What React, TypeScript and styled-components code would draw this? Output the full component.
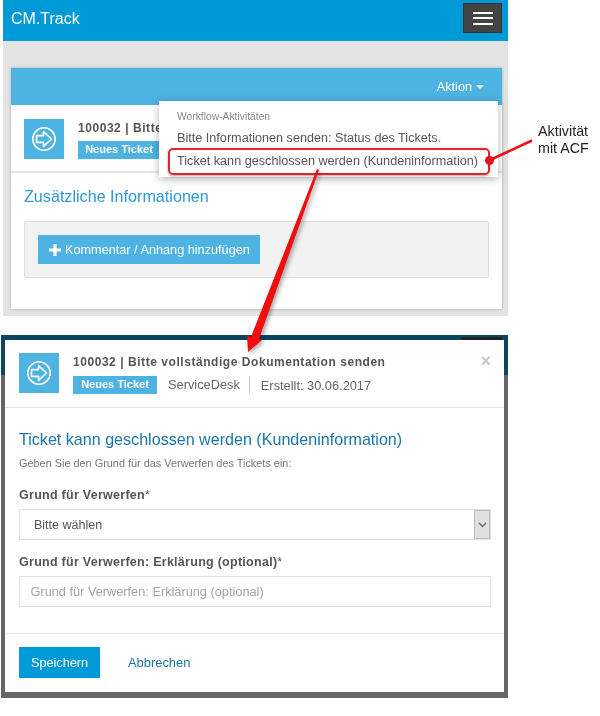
import React from 'react';
import styled, { createGlobalStyle } from 'styled-components';

const Global = createGlobalStyle`
  html, body { margin: 0; padding: 0; background: #fff; }
  body { font-family: "Liberation Sans", Arial, sans-serif; color: #555; }
  * { box-sizing: border-box; }
`;

const Page = styled.div`
  position: relative;
  width: 600px;
  height: 716px;
  overflow: hidden;
  background: #fff;
  filter: blur(0.3px);
`;

const Shot = styled.section`
  margin-left: 3px;
  width: 505px;
  height: 316px;
  background: #e3e3e3;
`;

const TopBar = styled.header`
  height: 41px;
  background: #0099d8;
  display: flex;
  align-items: flex-start;
  justify-content: space-between;
  padding: 3px 6px 0 8px;
`;

const Brand = styled.div`
  font-size: 16px;
  line-height: 32px;
  color: #fff;
`;

const Burger = styled.div`
  width: 39px;
  height: 30px;
  background: #444;
  border: 1px solid #333;
  display: flex;
  flex-direction: column;
  justify-content: center;
  align-items: center;
  gap: 3.5px;
  span {
    display: block;
    width: 20px;
    height: 2px;
    background: #fff;
  }
`;

const Panel = styled.div`
  margin: 27px 6px 0 8px;
  height: 241px;
  background: #fff;
  box-shadow: 0 0 3px rgba(0, 0, 0, 0.25);
`;

const PanelBar = styled.div`
  height: 37px;
  background: #4db3e3;
  display: flex;
  justify-content: flex-end;
  align-items: center;
  padding: 0 18px 0 0;
  color: #fff;
  font-size: 12.7px;
  gap: 4px;
`;

const Caret = styled.i`
  width: 0;
  height: 0;
  border-left: 4px solid transparent;
  border-right: 4px solid transparent;
  border-top: 4px solid #fff;
`;

const TicketRow = styled.div`
  height: 68px;
  padding: 14px 13px 0;
  display: flex;
  gap: 14px;
  border-bottom: 2px solid #e6e6e6;
`;

const IconBox = styled.div`
  width: 40px;
  height: 40px;
  flex: none;
  background: #4db3e3;
  display: flex;
  align-items: center;
  justify-content: center;
`;

const TicketText = styled.div`
  min-width: 0;
  white-space: nowrap;
  overflow: hidden;
`;

const TicketTitle = styled.div`
  font-size: 12px;
  font-weight: 700;
  letter-spacing: 0.55px;
  line-height: 14px;
  margin-top: 2px;
  color: #555;
`;

const Badge = styled.span<{ $w: number }>`
  display: inline-block;
  width: ${(p) => p.$w}px;
  height: 18px;
  line-height: 17px;
  text-align: center;
  background: #4db3e3;
  color: #fff;
  font-size: 11px;
  font-weight: 700;
`;

const RowBadge = styled(Badge)`
  display: block;
  margin-top: 6px;
`;

const PanelBody = styled.div`
  padding: 13px 13px 0;
`;

const SectionTitle = styled.h2`
  margin: 0;
  font-size: 16.15px;
  font-weight: 400;
  line-height: 20px;
  color: #2a9bd8;
`;

const Well = styled.div`
  margin-top: 15px;
  height: 57px;
  background: #f2f2f2;
  border: 1px solid #ddd;
  border-radius: 2px;
  padding: 13px 13px 0;
`;

const AddButton = styled.div`
  display: inline-flex;
  align-items: center;
  gap: 4px;
  width: 222px;
  height: 29px;
  padding-left: 11px;
  background: #4db3e3;
  color: #fff;
  font-size: 12.7px;
  white-space: nowrap;
`;

const Dropdown = styled.div`
  position: absolute;
  left: 159px;
  top: 101px;
  width: 339px;
  height: 76px;
  background: #fff;
  padding: 9px 0 0 18px;
  box-shadow: 0 2px 8px rgba(0, 0, 0, 0.3);
  white-space: nowrap;
`;

const DropdownHead = styled.div`
  font-size: 10.3px;
  line-height: 13px;
  color: #888;
`;

const DropdownItem = styled.div`
  font-size: 12.65px;
  line-height: 16px;
  margin-top: 7px;
  color: #555;
`;

const Highlight = styled.div`
  position: absolute;
  left: 168px;
  top: 148px;
  width: 322px;
  height: 27px;
  border: 2px solid #e8202a;
  border-radius: 5px;
  box-shadow: 0 1px 3px rgba(0, 0, 0, 0.35);
`;

const Arrows = styled.svg`
  position: absolute;
  left: 0;
  top: 0;
  pointer-events: none;
`;

const Note = styled.div`
  position: absolute;
  left: 538px;
  top: 123px;
  font-size: 14.3px;
  line-height: 17px;
  color: #222;
`;

const ModalFrame = styled.section`
  position: relative;
  margin: 19px 0 0 1px;
  width: 507px;
  height: 363px;
  padding: 5px 4px 6px;
  background: linear-gradient(#0c4562 0 40px, #666 40px);
  &::before {
    content: "";
    position: absolute;
    left: 460px;
    top: 2px;
    width: 41px;
    height: 3px;
    background: #222;
  }
`;

const Modal = styled.div`
  height: 352px;
  background: #fff;
  display: flex;
  flex-direction: column;
`;

const ModalHead = styled.div`
  position: relative;
  height: 68px;
  padding: 13px 14px 0;
  display: flex;
  gap: 14px;
  border-bottom: 1px solid #e6e6e6;
`;

const Close = styled.span`
  position: absolute;
  right: 13px;
  top: 11px;
  font-size: 18px;
  line-height: 20px;
  font-weight: 700;
  color: #c8c8c8;
`;

const MetaRow = styled.div`
  display: flex;
  align-items: center;
  margin-top: 7px;
  font-size: 12.8px;
  color: #666;
`;

const Vendor = styled.span`
  margin-left: 11px;
  padding-right: 9px;
  line-height: 18px;
  border-right: 1px solid #ccc;
`;

const Created = styled.span`
  margin-left: 11px;
`;

const ModalBody = styled.div`
  flex: 1;
  padding: 20px 13px 0 14px;
`;

const ModalTitle = styled.h3`
  margin: 0;
  font-size: 16.1px;
  font-weight: 400;
  line-height: 22px;
  color: #1b75a8;
`;

const Hint = styled.p`
  margin: 7px 0 0;
  font-size: 10.9px;
  line-height: 13px;
  color: #777;
`;

const Label = styled.label`
  display: block;
  font-size: 12.5px;
  font-weight: 700;
  letter-spacing: 0.27px;
  line-height: 14px;
  color: #555;
  margin-bottom: 7px;
`;

const Required = styled.span`
  font-weight: 400;
`;

const Field = styled.div<{ $top: number }>`
  margin-top: ${(p) => p.$top}px;
`;

const SelectBox = styled.div`
  height: 31px;
  border: 1.5px solid #e0e0e0;
  display: flex;
  align-items: center;
  justify-content: space-between;
  padding-left: 14px;
  font-size: 12.5px;
  color: #555;
`;

const SelectArrow = styled.div`
  width: 16px;
  height: 100%;
  background: #e0e0e0;
  border: 1px solid #bbb;
  display: flex;
  align-items: center;
  justify-content: center;
`;

const InputBox = styled.div`
  height: 31px;
  border: 1.5px solid #e0e0e0;
  display: flex;
  align-items: center;
  padding-left: 10.5px;
  font-size: 12.75px;
  color: #a3a3a3;
`;

const ModalFoot = styled.div`
  height: 59px;
  border-top: 1px solid #e9e9e9;
  padding: 13px 14px 0;
  display: flex;
  align-items: flex-start;
  gap: 28px;
`;

const SaveButton = styled.div`
  width: 81px;
  height: 31px;
  line-height: 32px;
  text-align: center;
  background: #0099d8;
  color: #fff;
  font-size: 12.7px;
`;

const CancelLink = styled.div`
  line-height: 31px;
  font-size: 12.9px;
  color: #1b75a8;
`;

const ArrowCircle = () => (
  <svg width="26" height="26" viewBox="0 0 26 26" fill="none" stroke="#fff" strokeWidth="1.6">
    <circle cx="13" cy="13" r="11.2" />
    <path d="M5.5 9.6H12.5V5.6L20.5 13 12.5 20.4V16.4H5.5Z" strokeLinejoin="round" />
  </svg>
);

export default function App() {
  return (
    <Page>
      <Global />
      <Shot>
        <TopBar>
          <Brand>CM.Track</Brand>
          <Burger>
            <span />
            <span />
            <span />
          </Burger>
        </TopBar>
        <Panel>
          <PanelBar>
            Aktion <Caret />
          </PanelBar>
          <TicketRow>
            <IconBox>
              <ArrowCircle />
            </IconBox>
            <TicketText>
              <TicketTitle>100032 | Bitte</TicketTitle>
              <RowBadge $w={82}>Neues Ticket</RowBadge>
            </TicketText>
          </TicketRow>
          <PanelBody>
            <SectionTitle>Zusätzliche Informationen</SectionTitle>
            <Well>
              <AddButton>
                <svg width="12" height="12" viewBox="0 0 12 12" fill="#fff">
                  <path d="M4.4 0h3.2v4.4H12v3.2H7.6V12H4.4V7.6H0V4.4h4.4z" />
                </svg>
                Kommentar / Anhang hinzufügen
              </AddButton>
            </Well>
          </PanelBody>
        </Panel>
      </Shot>

      <ModalFrame>
        <Modal>
          <ModalHead>
            <IconBox>
              <ArrowCircle />
            </IconBox>
            <div>
              <TicketTitle>100032 | Bitte vollständige Dokumentation senden</TicketTitle>
              <MetaRow>
                <Badge $w={84}>Neues Ticket</Badge>
                <Vendor>ServiceDesk</Vendor>
                <Created>Erstellt: 30.06.2017</Created>
              </MetaRow>
            </div>
            <Close>×</Close>
          </ModalHead>
          <ModalBody>
            <ModalTitle>Ticket kann geschlossen werden (Kundeninformation)</ModalTitle>
            <Hint>Geben Sie den Grund für das Verwerfen des Tickets ein:</Hint>
            <Field $top={18}>
              <Label>
                Grund für Verwerfen<Required>*</Required>
              </Label>
              <SelectBox>
                Bitte wählen
                <SelectArrow>
                  <svg width="9" height="6" viewBox="0 0 9 6" fill="none" stroke="#666" strokeWidth="1.4">
                    <path d="M1 1l3.5 3.5L8 1" />
                  </svg>
                </SelectArrow>
              </SelectBox>
            </Field>
            <Field $top={15}>
              <Label>
                Grund für Verwerfen: Erklärung (optional)<Required>*</Required>
              </Label>
              <InputBox>Grund für Verwerfen: Erklärung (optional)</InputBox>
            </Field>
          </ModalBody>
          <ModalFoot>
            <SaveButton>Speichern</SaveButton>
            <CancelLink>Abbrechen</CancelLink>
          </ModalFoot>
        </Modal>
      </ModalFrame>

      <Dropdown>
        <DropdownHead>Workflow-Aktivitäten</DropdownHead>
        <DropdownItem>Bitte Informationen senden: Status des Tickets.</DropdownItem>
        <DropdownItem>Ticket kann geschlossen werden (Kundeninformation)</DropdownItem>
      </Dropdown>
      <Highlight />
      <Note>
        Aktivität
        <br />
        mit ACF
      </Note>
      <Arrows width="600" height="716" viewBox="0 0 600 716">
        <defs>
          <filter id="arrowShadow" x="-30%" y="-10%" width="160%" height="120%">
            <feDropShadow dx="2" dy="2" stdDeviation="2" floodColor="#000" floodOpacity="0.35" />
          </filter>
        </defs>
        <g filter="url(#arrowShadow)" fill="#f00808">
          <path d="M317 169L319 170L259 339L262 340L248 352L247 335L251 337Z" />
        </g>
        <path d="M489 160.5L532 140.5" stroke="#e8101a" strokeWidth="2.6" />
        <circle cx="489.5" cy="160.5" r="4.5" fill="#e8101a" />
      </Arrows>
    </Page>
  );
}
